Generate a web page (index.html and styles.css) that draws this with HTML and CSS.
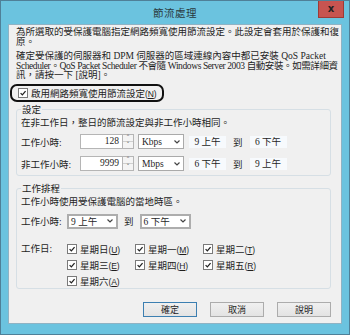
FILE: index.html
```html
<!DOCTYPE html>
<html lang="zh-Hant">
<head>
    <meta charset="UTF-8">
    <meta name="viewport" content="width=device-width, initial-scale=1.0">
    <title>節流處理</title>
    <link rel="stylesheet" href="styles.css">
</head>
<body>
<div class="window">
    <div class="titlebar">
        <span></span>
        <span class="title">節流處理</span>
        <span class="close">x</span>
    </div>
    <div class="content">
        <p class="intro">為所選取的受保護電腦指定網路頻寬使用節流設定。此設定會套用於保護和復<br>原。</p>
        <p class="note">確定受保護的伺服器和 DPM 伺服器的區域連線內容中都已安裝 QoS Packet<br><span class="tight">Scheduler。QoS Packet Scheduler 不會隨 Windows Server 2003 自動安裝。如需詳細資</span><br>訊，請按一下 [說明]。</p>

        <label class="enable">
            <span class="box"><svg viewBox="0 0 10 10"><path d="M2 5.2 L4.2 7.4 L8.2 2.6" /></svg></span>
            <span>啟用網路頻寬使用節流設定<span class="key">(<u>N</u>)</span></span>
        </label>

        <fieldset class="group">
            <legend>設定</legend>
            <p class="desc">在非工作日，整日的節流設定與非工作小時相同。</p>
            <div class="rate-row">
                <span class="lbl">工作小時:</span>
                <span class="num">128</span>
                <span class="spin"><i>&#x2C4;</i><i>&#x2C5;</i></span>
                <span class="select unit">Kbps<svg viewBox="0 0 8 6"><path d="M1.5 1.5 L4 4 L6.5 1.5" /></svg></span>
                <span class="range"><span class="slot">9 上午</span><span class="to">到</span><span class="slot">6 下午</span></span>
            </div>
            <div class="rate-row">
                <span class="lbl">非工作小時:</span>
                <span class="num">9999</span>
                <span class="spin"><i>&#x2C4;</i><i>&#x2C5;</i></span>
                <span class="select unit">Mbps<svg viewBox="0 0 8 6"><path d="M1.5 1.5 L4 4 L6.5 1.5" /></svg></span>
                <span class="range"><span class="slot">6 下午</span><span class="to">到</span><span class="slot">9 上午</span></span>
            </div>
        </fieldset>

        <fieldset class="group schedule">
            <legend>工作排程</legend>
            <p class="desc">工作小時使用受保護電腦的當地時區。</p>
            <div class="hours-row">
                <span class="lbl short">工作小時:</span>
                <span class="select hour">9 上午<svg viewBox="0 0 8 6"><path d="M1.5 1.5 L4 4 L6.5 1.5" /></svg></span>
                <span class="to">到</span>
                <span class="select hour">6 下午<svg viewBox="0 0 8 6"><path d="M1.5 1.5 L4 4 L6.5 1.5" /></svg></span>
            </div>
            <div class="days-row">
                <span class="lbl short">工作日:</span>
                <div class="days">
                    <label class="day"><span class="box"><svg viewBox="0 0 10 10"><path d="M2 5.2 L4.2 7.4 L8.2 2.6" /></svg></span><span>星期日<span class="key">(<u>U</u>)</span></span></label>
                    <label class="day"><span class="box"><svg viewBox="0 0 10 10"><path d="M2 5.2 L4.2 7.4 L8.2 2.6" /></svg></span><span>星期一<span class="key">(<u>M</u>)</span></span></label>
                    <label class="day"><span class="box"><svg viewBox="0 0 10 10"><path d="M2 5.2 L4.2 7.4 L8.2 2.6" /></svg></span><span>星期二<span class="key">(<u>T</u>)</span></span></label>
                    <label class="day"><span class="box"><svg viewBox="0 0 10 10"><path d="M2 5.2 L4.2 7.4 L8.2 2.6" /></svg></span><span>星期三<span class="key">(<u>E</u>)</span></span></label>
                    <label class="day"><span class="box"><svg viewBox="0 0 10 10"><path d="M2 5.2 L4.2 7.4 L8.2 2.6" /></svg></span><span>星期四<span class="key">(<u>H</u>)</span></span></label>
                    <label class="day"><span class="box"><svg viewBox="0 0 10 10"><path d="M2 5.2 L4.2 7.4 L8.2 2.6" /></svg></span><span>星期五<span class="key">(<u>R</u>)</span></span></label>
                    <label class="day"><span class="box"><svg viewBox="0 0 10 10"><path d="M2 5.2 L4.2 7.4 L8.2 2.6" /></svg></span><span>星期六<span class="key">(<u>A</u>)</span></span></label>
                </div>
            </div>
        </fieldset>

        <div class="buttons">
            <button class="btn default">確定</button>
            <button class="btn">取消</button>
            <button class="btn">說明</button>
        </div>
    </div>
</div>
</body>
</html>
```

FILE: styles.css
```css
* {
    box-sizing: border-box;
}
body {
    margin: 0;
    font-family: "Liberation Serif", "Noto Sans CJK TC", serif;
    font-size: 9.5px;
    color: #1e1e1e;
    text-autospace: no-autospace;
}
p {
    margin: 0;
}
.window {
    width: 350px;
    height: 335px;
    background: #6bc3df;
    border: 1px solid #4f8098;
    padding: 0 7px 10px;
    display: flex;
    flex-direction: column;
}
.titlebar {
    height: 23px;
    margin: 0 -7px;
    display: grid;
    grid-template-columns: 1fr auto 1fr;
    align-items: start;
}
.title {
    font-family: "Noto Sans CJK TC", sans-serif;
    font-size: 10.5px;
    line-height: 24px;
    color: #2a3a40;
    letter-spacing: 0.5px;
}
.close {
    justify-self: end;
    margin-right: 5px;
    width: 26px;
    height: 17px;
    background: #c75450;
    border: 1px solid #9e3a36;
    border-top: 0;
    color: #222;
    font-family: "DejaVu Sans", sans-serif;
    font-weight: bold;
    font-size: 10px;
    line-height: 15px;
    text-align: center;
}
.content {
    flex: 1;
    background: #f0f0f0;
    border: 1px solid #8fb3c4;
    padding: 3px 0 0;
    display: flex;
    flex-direction: column;
}
.intro {
    padding-left: 7px;
    line-height: 9.5px;
    white-space: nowrap;
}
.note {
    margin-top: 5px;
    padding-left: 7px;
    line-height: 9.5px;
    white-space: nowrap;
}
.tight {
    letter-spacing: -0.4px;
}
.key {
    font-family: "Liberation Sans", sans-serif;
    font-size: 8.5px;
    letter-spacing: -0.1px;
}
.enable {
    align-self: flex-start;
    margin: 3px 0 0 1px;
    height: 18px;
    padding: 0 5px 0 6px;
    border: 2px solid #111;
    border-radius: 7px;
    display: flex;
    align-items: center;
    gap: 3px;
}
.box {
    width: 10px;
    height: 10px;
    border: 1px solid #7a7a7a;
    background: #fff;
    display: inline-flex;
    flex: none;
}
.box svg {
    width: 8px;
    height: 8px;
    fill: none;
    stroke: #222;
    stroke-width: 1.6;
}
.group {
    margin: 3px 10px 0 7px;
    padding: 0 4px 3px;
    border: 1px solid #d6dfe5;
    border-radius: 3px;
    min-width: 0;
}
.group legend {
    padding: 0 1px;
    line-height: 10px;
}
.desc {
    line-height: 12px;
    margin-top: 2px;
}
.rate-row {
    display: flex;
    align-items: center;
    height: 16px;
    margin-top: 5px;
}
.rate-row + .rate-row {
    margin-top: 6px;
}
.lbl {
    width: 59px;
    flex: none;
}
.lbl.short {
    width: 46px;
}
.num {
    width: 43px;
    height: 15px;
    background: #fff;
    border: 1px solid #b5b5b5;
    text-align: right;
    padding-right: 3px;
    line-height: 13px;
}
.spin {
    width: 11px;
    height: 15px;
    display: flex;
    flex-direction: column;
    border: 1px solid #b5b5b5;
    border-left: 0;
    background: #f4f4f4;
}
.spin i {
    flex: 1;
    font-style: normal;
    font-family: "DejaVu Sans", sans-serif;
    font-size: 7px;
    line-height: 6px;
    text-align: center;
    color: #555;
}
.spin i + i {
    border-top: 1px solid #cfcfcf;
}
.select {
    height: 15px;
    background: #fff;
    border: 1px solid #aaa;
    display: flex;
    align-items: center;
    justify-content: space-between;
    padding: 0 2px 0 3px;
}
.select svg {
    width: 8px;
    height: 6px;
    fill: none;
    stroke: #444;
    stroke-width: 1.2;
}
.unit {
    width: 46px;
    margin-left: 4px;
}
.range {
    display: flex;
    align-items: center;
    margin-left: 5px;
}
.slot {
    width: 37px;
    height: 12px;
    line-height: 12px;
    background: #f7fafd;
    text-align: center;
}
.to {
    margin: 0 6px;
}
.range .to {
    margin: 0 7px;
}
.schedule {
    margin-top: 8px;
    padding-bottom: 1px;
}
.hours-row {
    display: flex;
    align-items: center;
    margin-top: 6px;
    height: 15px;
}
.hour {
    width: 51px;
    border: 2px solid #adadad;
    padding-left: 2px;
}
.days-row {
    display: flex;
    align-items: flex-start;
    margin-top: 14px;
}
.days-row .lbl {
    line-height: 12px;
}
.days {
    display: grid;
    grid-template-columns: repeat(3, 68px);
    row-gap: 4px;
}
.day {
    display: flex;
    align-items: center;
    gap: 3px;
    height: 12px;
}
.buttons {
    margin: auto 10px 6px 0;
    display: flex;
    justify-content: flex-end;
    gap: 13px;
}
.btn {
    width: 54px;
    height: 15px;
    padding: 0;
    font: inherit;
    font-size: 9px;
    color: #1e1e1e;
    border: 1px solid #acacac;
    background: linear-gradient(#f0f0f0, #e3e3e3);
}
.btn.default {
    border-color: #3c7fb1;
}
```
